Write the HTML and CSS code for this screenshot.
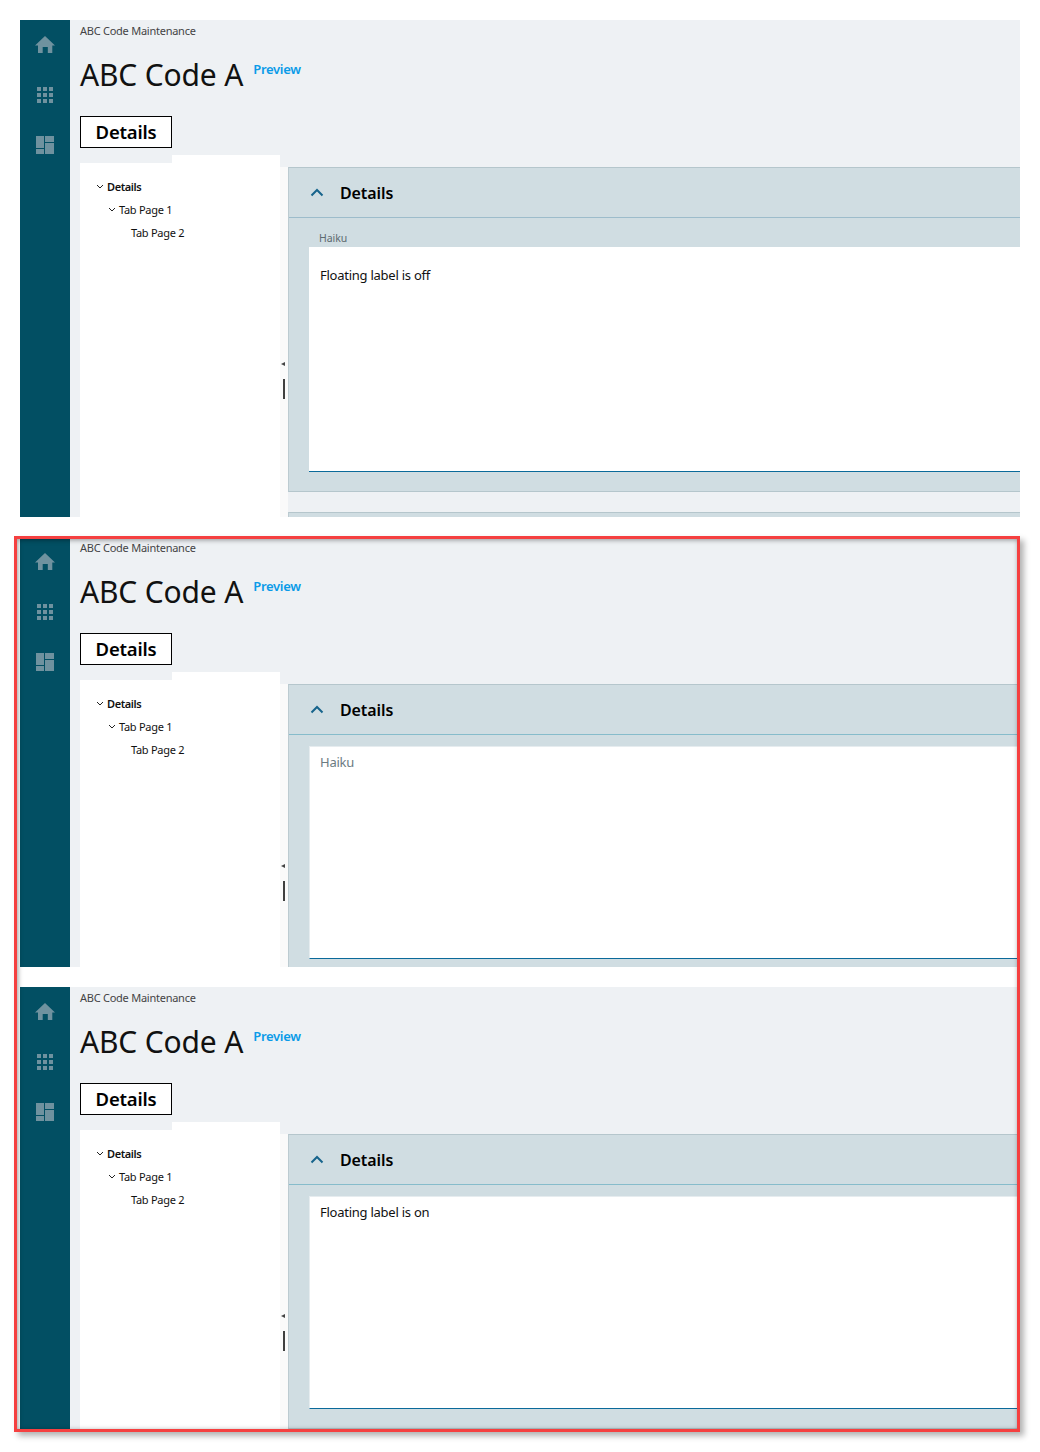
FILE: index.html
```html
<!DOCTYPE html>
<html lang="en">
<head>
<meta charset="utf-8">
<title>ABC Code A</title>
<link rel="stylesheet" href="styles.css">
</head>
<body>
<svg class="sprites" width="0" height="0" aria-hidden="true">
  <symbol id="i-home" viewBox="0 0 20 18"><path d="M10 0 L20 9.5 H17.3 V17 H12.8 V11 H7.7 V17 H3 V9.5 H0 Z"/></symbol>
  <symbol id="i-grid" viewBox="0 0 16 16"><path d="M0 0h4v4H0zM6 0h4v4H6zM12 0h4v4h-4zM0 6h4v4H0zM6 6h4v4H6zM12 6h4v4h-4zM0 12h4v4H0zM6 12h4v4H6zM12 12h4v4h-4z"/></symbol>
  <symbol id="i-dash" viewBox="0 0 18 18"><path d="M0 0h8v12H0zM0 13h8v5H0zM9 0h9v6H9zM9 7h9v11H9z"/></symbol>
  <symbol id="i-down" viewBox="0 0 8 5"><path d="M1 1 L4 4 L7 1" fill="none" stroke="currentColor" stroke-width="1"/></symbol>
  <symbol id="i-up" viewBox="0 0 14 9"><path d="M1.5 7.5 L7 2 L12.5 7.5" fill="none" stroke="currentColor" stroke-width="2"/></symbol>
</svg>

<div class="page">
  <section class="screen screen-off">
    <div class="screen-inner">
      <nav class="rail">
        <svg class="ico ico-home"><use href="#i-home"/></svg>
        <svg class="ico ico-grid"><use href="#i-grid"/></svg>
        <svg class="ico ico-dash"><use href="#i-dash"/></svg>
      </nav>
      <div class="main">
        <div class="crumb">ABC Code Maintenance</div>
        <div class="title-row"><h1 class="title">ABC Code A</h1><a class="preview">Preview</a></div>
        <div class="tab">Details</div>
        <div class="body">
          <div class="left">
            <div class="notch"></div>
            <ul class="tree">
              <li class="node node-0"><svg class="caret"><use href="#i-down"/></svg>Details</li>
              <li class="node node-1"><svg class="caret"><use href="#i-down"/></svg>Tab Page 1</li>
              <li class="node node-2">Tab Page 2</li>
            </ul>
          </div>
          <div class="right">
            <div class="splitter"><span class="arrow"></span><span class="bar"></span></div>
            <div class="content">
              <div class="panel">
                <header class="panel-head"><svg class="chev"><use href="#i-up"/></svg><h2 class="panel-title">Details</h2></header>
                <div class="panel-body">
                  <label class="static-label">Haiku</label>
                  <div class="field field-tall">Floating label is off</div>
                </div>
              </div>
              <div class="panel-gap"></div>
              <div class="panel panel-next"></div>
            </div>
          </div>
        </div>
      </div>
    </div>
  </section>

  <div class="frame">
    <section class="screen screen-empty">
      <div class="screen-inner">
        <nav class="rail">
          <svg class="ico ico-home"><use href="#i-home"/></svg>
          <svg class="ico ico-grid"><use href="#i-grid"/></svg>
          <svg class="ico ico-dash"><use href="#i-dash"/></svg>
        </nav>
        <div class="main">
          <div class="crumb">ABC Code Maintenance</div>
          <div class="title-row"><h1 class="title">ABC Code A</h1><a class="preview">Preview</a></div>
          <div class="tab">Details</div>
          <div class="body">
            <div class="left">
              <div class="notch"></div>
              <ul class="tree">
                <li class="node node-0"><svg class="caret"><use href="#i-down"/></svg>Details</li>
                <li class="node node-1"><svg class="caret"><use href="#i-down"/></svg>Tab Page 1</li>
                <li class="node node-2">Tab Page 2</li>
              </ul>
            </div>
            <div class="right">
              <div class="splitter"><span class="arrow"></span><span class="bar"></span></div>
              <div class="content">
                <div class="panel panel-fill">
                  <header class="panel-head"><svg class="chev"><use href="#i-up"/></svg><h2 class="panel-title">Details</h2></header>
                  <div class="panel-body panel-body-float">
                    <div class="field field-float field-placeholder">Haiku</div>
                  </div>
                </div>
              </div>
            </div>
          </div>
        </div>
      </div>
    </section>

    <section class="screen screen-on">
      <div class="screen-inner">
        <nav class="rail">
          <svg class="ico ico-home"><use href="#i-home"/></svg>
          <svg class="ico ico-grid"><use href="#i-grid"/></svg>
          <svg class="ico ico-dash"><use href="#i-dash"/></svg>
        </nav>
        <div class="main">
          <div class="crumb">ABC Code Maintenance</div>
          <div class="title-row"><h1 class="title">ABC Code A</h1><a class="preview">Preview</a></div>
          <div class="tab">Details</div>
          <div class="body">
            <div class="left">
              <div class="notch"></div>
              <ul class="tree">
                <li class="node node-0"><svg class="caret"><use href="#i-down"/></svg>Details</li>
                <li class="node node-1"><svg class="caret"><use href="#i-down"/></svg>Tab Page 1</li>
                <li class="node node-2">Tab Page 2</li>
              </ul>
            </div>
            <div class="right">
              <div class="splitter"><span class="arrow"></span><span class="bar"></span></div>
              <div class="content">
                <div class="panel panel-fill">
                  <header class="panel-head"><svg class="chev"><use href="#i-up"/></svg><h2 class="panel-title">Details</h2></header>
                  <div class="panel-body panel-body-float">
                    <div class="field field-float">Floating label is on</div>
                  </div>
                </div>
              </div>
            </div>
          </div>
        </div>
      </div>
    </section>
  </div>
</div>
</body>
</html>
```

FILE: styles.css
```css
* { box-sizing: border-box; }
html, body { margin: 0; padding: 0; background: #fff; }
body {
  width: 1040px;
  height: 1452px;
  overflow: hidden;
  font-family: "Noto Sans", "Open Sans", sans-serif;
  color: #111;
}
.sprites { position: absolute; }
.page { padding: 20px 20px 0; }

.screen { overflow: hidden; width: 1000px; }
.screen-off { height: 497px; }
.screen-empty { height: 428px; width: 997px; }
.screen-on { height: 442px; width: 997px; margin-top: 20px; }
.screen-empty .screen-inner { margin-top: -2px; }
.screen-inner { display: flex; width: 1000px; height: 600px; }

.frame {
  position: relative;
  margin: 19px 0 0 -6px;
  width: 1006px;
  border: 3px solid #f54040;
  padding-left: 3px;
  box-shadow: 4px 4px 6px rgba(0, 0, 0, .3);
}
.frame::after {
  content: "";
  position: absolute;
  inset: 0;
  box-shadow: inset 1px 1px 5px rgba(0, 0, 0, .4);
  pointer-events: none;
}

.rail {
  flex: 0 0 50px;
  background: #024f63;
  display: flex;
  flex-direction: column;
  align-items: center;
  padding-top: 16px;
}
.ico { fill: #6f929f; display: block; flex: none; }
.ico-home { width: 20px; height: 18px; }
.ico-grid { width: 16px; height: 16px; margin-top: 33px; }
.ico-dash { width: 18px; height: 18px; margin-top: 33px; }

.main { flex: 1; min-width: 0; background: #eef1f4; padding-left: 10px; display: flex; flex-direction: column; }
.crumb { font-size: 11px; letter-spacing: -.25px; line-height: 22px; color: #444; height: 22px; }
.title-row { display: flex; align-items: flex-start; height: 74px; padding-top: 12px; }
.title { margin: 0; font-size: 30px; font-weight: 400; letter-spacing: -.17px; line-height: 42px; color: #111; }
.preview { margin: 6px 0 0 10px; font-size: 13px; font-weight: 600; letter-spacing: -.3px; line-height: 18px; color: #0a9be8; }
.tab {
  width: 92px;
  height: 32px;
  border: 1px solid #000;
  background: #fff;
  font-size: 18.5px;
  font-weight: 600;
  letter-spacing: -.2px;
  line-height: 30px;
  text-align: center;
  color: #000;
}

.body { display: flex; flex: 1; margin-top: 7px; }
.left { flex: 0 0 200px; display: flex; flex-direction: column; }
.notch { height: 8px; margin-left: 92px; background: #fff; flex: none; }
.tree { list-style: none; margin: 0; padding: 12px 0 0; background: #fff; flex: 1; }
.node { height: 23px; font-size: 11px; letter-spacing: -.27px; line-height: 23px; color: #111; white-space: nowrap; display: flex; align-items: center; }
.node-0 { padding-left: 16px; font-weight: 600; letter-spacing: -.4px; }
.node-1 { padding-left: 28px; }
.node-2 { padding-left: 51px; }
.caret { width: 8px; height: 5px; margin-right: 3px; color: #222; flex: none; }

.right { flex: 1; min-width: 0; padding-top: 12px; display: flex; }
.splitter { flex: 0 0 8px; background: #fafafa; display: flex; flex-direction: column; align-items: center; padding-top: 180px; }
.screen-off .splitter { padding-top: 195px; }
.arrow { width: 0; height: 0; border: 2.5px solid transparent; border-right: 4px solid #444; border-left: 0; margin-left: -3px; }
.bar { width: 2px; height: 20px; background: #3f3f3f; margin-top: 13px; margin-left: -1px; }

.content { flex: 1; min-width: 0; display: flex; flex-direction: column; }
.panel { background: #d0dde2; border-top: 1px solid #b5c6cc; border-left: 1px solid #bccbd1; border-bottom: 1px solid #b5c6cc; flex: none; }
.panel-fill { height: 295px; }
.panel-head { height: 50px; display: flex; align-items: center; padding-left: 21px; border-bottom: 1px solid #9dbccb; }
.panel-fill .panel-head { border-bottom-color: #86bccb; }
.chev { width: 14px; height: 9px; color: #17648c; flex: none; }
.panel-title { margin: 0 0 0 16px; font-size: 16px; font-weight: 600; letter-spacing: -.1px; line-height: 22px; color: #000; }
.panel-body { padding: 12px 0 19px 20px; height: 273px; }
.static-label { display: block; font-size: 10.5px; letter-spacing: -.05px; line-height: 17px; color: #5e6a70; padding-left: 10px; }
.field { background: #fff; border-bottom: 1px solid #0b6a9a; font-size: 13px; letter-spacing: -.25px; color: #111; padding: 18px 0 0 11px; line-height: 20px; }
.field-tall { height: 225px; }
.field-float { height: 213px; padding-top: 5px; border-top: 1px solid #e6ecef; border-left: 1px solid #e6ecef; padding-left: 10px; }
.panel-body-float { padding-top: 11px; height: auto; }
.field-placeholder { color: #6b7b82; }
.panel-gap { height: 20px; background: #eef1f4; flex: none; }
.panel-next { height: 30px; border-bottom: 0; }
```
